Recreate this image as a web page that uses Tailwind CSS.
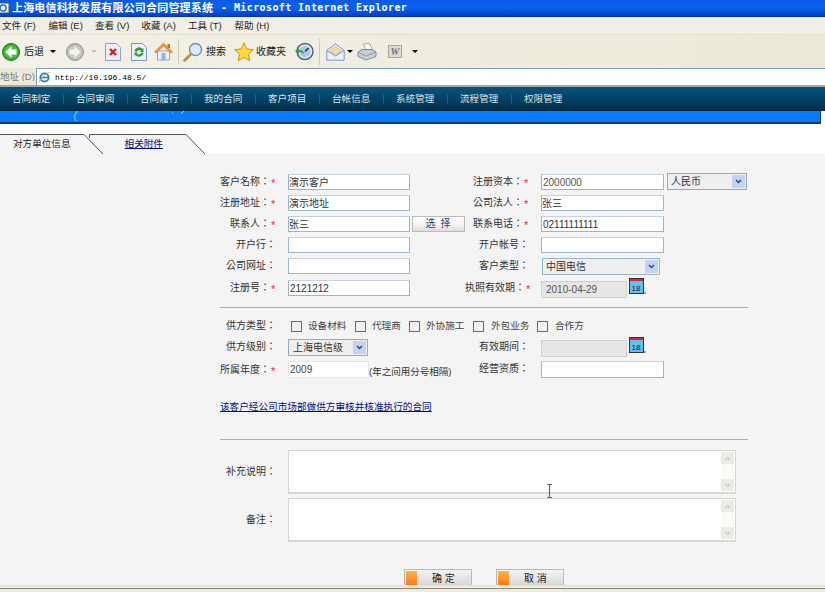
<!DOCTYPE html>
<html lang="en">
<head>
  <meta charset="UTF-8" />
  <title>合同管理系统</title>
  <script src="https://cdn.jsdelivr.net/npm/@tailwindcss/browser@4"></script>
</head>
<body class="w-[825px] h-[592px] overflow-hidden relative bg-white text-[#333] text-[10px] leading-none font-['Liberation_Sans','Noto_Sans_CJK_SC',sans-serif]">

  <!-- title bar -->
  <div class="h-[17px] flex items-center bg-gradient-to-b from-[#0a5ae6] via-[#0a62ec] to-[#0040c4] border-b border-[#0038b0] text-white overflow-hidden">
    <svg class="w-[10px] h-[12px] shrink-0" viewBox="0 0 10 12"><rect x="-3" y="1" width="12" height="10" fill="#f4f4f4" stroke="#555"/><circle cx="3" cy="6" r="3" fill="none" stroke="#2a6fc9" stroke-width="1.5"/></svg>
    <span class="ml-[2px] text-[11px] tracking-[0.17px] font-bold whitespace-nowrap">上海电信科技发展有限公司合同管理系统</span>
    <span class="ml-[8px] font-['DejaVu_Sans_Mono',monospace] font-bold text-[10px] tracking-[0.4px] whitespace-nowrap">- Microsoft Internet Explorer</span>
  </div>

  <!-- menu bar -->
  <div class="h-[18px] flex items-center bg-[#f1efe5] border-b border-[#e4e0cf] text-[#222] text-[9.5px] whitespace-nowrap pl-[2px]">
    <span class="w-[46.5px]">文件 (F)</span>
    <span class="w-[46.5px]">编辑 (E)</span>
    <span class="w-[46.5px]">查看 (V)</span>
    <span class="w-[46.5px]">收藏 (A)</span>
    <span class="w-[46.5px]">工具 (T)</span>
    <span class="w-[46.5px]">帮助 (H)</span>
  </div>

  <!-- toolbar -->
  <div class="h-[33px] flex items-center bg-gradient-to-r from-[#f3f1e8] to-[#ece9d8] text-[#222] whitespace-nowrap pl-[2px]">
    <svg class="w-[18px] h-[18px] shrink-0" viewBox="0 0 18 18"><circle cx="9" cy="9" r="8.5" fill="#3aa62e" stroke="#1f7a1c"/><circle cx="9" cy="9" r="6.8" fill="#4cc03c"/><path d="M9.500 3 3.500 9l6 6v-3.500H14.500v-5H9.500z" fill="#fff"/></svg>
    <span class="ml-[4px] w-[18px]">后退</span>
    <span class="ml-[8px] w-0 h-0 border-x-[3px] border-x-transparent border-t-[3px] border-t-black"></span>
    <svg class="ml-[10px] w-[18px] h-[18px] shrink-0" viewBox="0 0 18 18"><circle cx="9" cy="9" r="8.5" fill="#b9b9b2" stroke="#9a9a92"/><circle cx="9" cy="9" r="6.800" fill="#c9c9c2"/><path d="M8.500 3l6 6-6 6v-3.500H3.500v-5H8.500z" fill="#f4f4f0"/></svg>
    <span class="ml-[7px] w-0 h-0 border-x-[3px] border-x-transparent border-t-[3px] border-t-[#c4c2b6]"></span>
    <svg class="ml-[8px] w-[16px] h-[18px] shrink-0" viewBox="0 0 16 18"><path d="M.5.5h11l4 4v13H.5z" fill="#e9eefa" stroke="#8ea3cb"/><path d="M5 6l6 6M11 6l-6 6" stroke="#d8201c" stroke-width="2.400"/></svg>
    <svg class="ml-[10px] w-[16px] h-[18px] shrink-0" viewBox="0 0 16 18"><path d="M.5.5h11l4 4v13H.5z" fill="#e9eefa" stroke="#7f95c0"/><path d="M3.500 8a4.500 4.500 0 0 1 8-2l1-1v4H9l1.200-1.200A3 3 0 0 0 5.500 9z" fill="#2d9c2d"/><path d="M12.500 10a4.500 4.500 0 0 1-8 2l-1 1V9.500H7L5.800 10.800A3 3 0 0 0 10.500 9.500z" fill="#2d9c2d"/></svg>
    <svg class="ml-[7px] w-[19px] h-[19px] shrink-0" viewBox="0 0 19 19"><path d="M3.500 9v9h12V9z" fill="#eef0f6" stroke="#9aa5bd"/><rect x="7.500" y="11" width="4" height="7" fill="#8db3e2"/><path d="M.5 10 9.500 1l9 9-2 1-7-7-7 7z" fill="#ef9b3a" stroke="#c8701c" stroke-width=".6"/><rect x="13.500" y="2" width="2.500" height="4" fill="#c8701c"/></svg>
    <span class="ml-[5px] w-px h-[26px] bg-[#cfccba]"></span>
    <svg class="ml-[4px] w-[20px] h-[20px] shrink-0" viewBox="0 0 20 20"><circle cx="12.500" cy="7.500" r="6" fill="#d9ecfb" stroke="#6b8fb8" stroke-width="1.400"/><path d="M8 12 1.500 18.500" stroke="#c98a2e" stroke-width="2.600" stroke-linecap="round"/></svg>
    <span class="ml-[3px] w-[28px]">搜索</span>
    <svg class="w-[20px] h-[20px] shrink-0" viewBox="0 0 20 20"><path d="M10 .8l2.800 6.200 6.500.7-4.900 4.400 1.400 6.600L10 15.400l-5.800 3.300 1.400-6.600L.7 7.700 7.200 7z" fill="#ffd83a" stroke="#c69a12"/></svg>
    <span class="ml-[2px] w-[39px]">收藏夹</span>
    <svg class="w-[19px] h-[19px] shrink-0" viewBox="0 0 19 19"><circle cx="10" cy="9.500" r="8" fill="#dfe6ee" stroke="#55606e" stroke-width="1.400"/><circle cx="10" cy="9.500" r="5.500" fill="#a9c6e6"/><path d="M10 9.500l3.500-3.500" stroke="#223" stroke-width="1.200"/><path d="M0 9l4-3v2c3 0 5 1.500 5 4-2-1.500-3-2-5-2v2z" fill="#2f9e36"/></svg>
    <span class="ml-[5px] w-px h-[26px] bg-[#cfccba]"></span>
    <svg class="ml-[6px] w-[19px] h-[18px] shrink-0" viewBox="0 0 19 18"><path d="M.8 7.500 9.500.8l8.700 6.700v9.700H.8z" fill="#e9eefb" stroke="#7e96c8"/><path d="M3.500 8 9.500 3.500 15.500 8l-6 4z" fill="#f7d9a8" stroke="#d9a860" stroke-width=".6"/><path d="M.8 7.500 9.500 13l8.700-5.500" fill="none" stroke="#7e96c8"/></svg>
    <span class="ml-[2px] w-0 h-0 border-x-[3px] border-x-transparent border-t-[3px] border-t-black"></span>
    <svg class="ml-[4px] w-[20px] h-[18px] shrink-0" viewBox="0 0 20 18"><path d="M6.500 1l6-.5 3 6-6 1z" fill="#fff" stroke="#8b8f96" stroke-width=".8"/><path d="M1 9 5 6.500h10L19 9v4.500L9 17 1 13.500z" fill="#c9ced6" stroke="#70757d" stroke-width=".8"/><path d="M1 9.500l8 3.500 10-4" fill="none" stroke="#8b9099" stroke-width=".8"/></svg>
    <span class="ml-[11px] flex items-center justify-center w-[14px] h-[13px] bg-[#dcdbd2] border border-[#a8a79e] font-['Liberation_Serif',serif] italic font-bold text-[10px] text-[#777]">W</span>
    <span class="ml-[10px] w-0 h-0 border-x-[3px] border-x-transparent border-t-[3px] border-t-black"></span>
  </div>

  <!-- address bar -->
  <div class="h-[17px] flex items-center bg-[#ece9d8] whitespace-nowrap">
    <span class="w-[36px] shrink-0 overflow-hidden text-[9.5px] text-[#777]">地址 (D)</span>
    <div class="flex-1 h-full bg-white border-t border-[#7f9db9] border-l flex items-center pl-[1px]">
      <svg class="w-[13px] h-[13px] shrink-0" viewBox="0 0 13 13"><circle cx="6.500" cy="6.500" r="4.200" fill="#dcefff" stroke="#2a78c8" stroke-width="1.800"/><path d="M3 6.500h7" stroke="#2a78c8" stroke-width="1.300"/><path d="M1 11C3 7 8 2 12 1" fill="none" stroke="#e8a23a"/></svg>
      <span class="ml-[4px] mt-[1px] font-['Liberation_Mono',monospace] text-[8px] text-black">http://10.196.48.5/</span>
    </div>
  </div>
  <div class="h-[2px] bg-[#a9a89f]"></div>

  <!-- app nav -->
  <nav class="h-[24px] pt-[1px] flex items-center bg-gradient-to-b from-[#04557f] to-[#02304c] border-b border-[#01263e] text-[#d8e4ec] text-[9.6px] whitespace-nowrap">
    <a class="w-[64px] pl-[12px] border-r border-[#17618a] h-[10px] flex items-center">合同制定</a>
    <a class="w-[64px] pl-[12px] border-r border-[#17618a] h-[10px] flex items-center">合同审阅</a>
    <a class="w-[64px] pl-[12px] border-r border-[#17618a] h-[10px] flex items-center">合同履行</a>
    <a class="w-[64px] pl-[12px] border-r border-[#17618a] h-[10px] flex items-center">我的合同</a>
    <a class="w-[64px] pl-[12px] border-r border-[#17618a] h-[10px] flex items-center">客户项目</a>
    <a class="w-[64px] pl-[12px] border-r border-[#17618a] h-[10px] flex items-center">台帐信息</a>
    <a class="w-[64px] pl-[12px] border-r border-[#17618a] h-[10px] flex items-center">系统管理</a>
    <a class="w-[64px] pl-[12px] border-r border-[#17618a] h-[10px] flex items-center">流程管理</a>
    <a class="w-[64px] pl-[12px] h-[10px] flex items-center">权限管理</a>
  </nav>
  <div class="h-[13px] w-[821px] bg-[#0a7bf8] border-b-2 border-r border-[#0d3f6e] flex items-start overflow-hidden">
    <svg class="ml-[72px] w-[116px] h-[12px]" viewBox="0 0 116 12"><path d="M6 0C2 3 2 7 4 10" fill="none" stroke="#5aa5f5" stroke-width="2"/><path d="M100 2h1M112 0l-3 3" stroke="#9fcdfb" stroke-width="1"/></svg>
  </div>

  <!-- tabs -->
  <div class="h-[30px] relative bg-white">
    <svg class="absolute left-0 top-[10px] w-[206px] h-[20px]" viewBox="0 0 206 20">
      <path d="M89.500 .5H186L205 20H103L89.500 5z" fill="#f4f4f4"/>
      <path d="M89.500 4V.5H186L205 20" fill="none" stroke="#555"/>
      <path d="M0 .5H84L103 20H0z" fill="#f4f4f4"/>
      <path d="M0 .5H84L103 20" fill="none" stroke="#555"/>
    </svg>
    <div class="relative flex pt-[15px] text-[9.6px] whitespace-nowrap">
      <span class="ml-[13px] text-[#222]">对方单位信息</span>
      <a class="ml-[54px] text-[#000f88] underline">相关附件</a>
    </div>
  </div>

  <!-- form panel -->
  <main class="h-[431px] bg-[#f4f4f4] pt-[20px] pl-[220px] overflow-hidden">
    <div class="w-[528px]">

      <div class="grid grid-cols-[68px_122px_55px_76px_123px_84px] auto-rows-[21px] items-start">
        <div class="flex justify-end h-[16px] items-center whitespace-nowrap font-['Liberation_Sans','Noto_Sans_CJK_TC',sans-serif]">客户名称：<span class="w-[18px] pl-[1px] pt-[2px] text-[#f02040] text-[11px]">*</span></div>
        <input value="演示客户" class="h-[16px] w-[122px] bg-white border border-[#9db4cc] border-t-[#c4d2e0] pb-[2px] text-[10px] text-[#333]" />
        <div></div>
        <div class="flex justify-end h-[16px] items-center whitespace-nowrap font-['Liberation_Sans','Noto_Sans_CJK_TC',sans-serif]">注册资本：<span class="w-[18px] pl-[1px] pt-[2px] text-[#f02040] text-[11px]">*</span></div>
        <input value="2000000" class="h-[16px] w-[123px] bg-white border border-[#9db4cc] border-t-[#c4d2e0] px-[1px] text-[10px] text-[#555]" />
        <div class="ml-[3px] -mt-[1px] w-[80px] h-[17px] flex items-center justify-between bg-[#efefef] border border-[#8fabcf] pl-[3px] pr-[1px]">
          <span>人民币</span>
          <span class="w-[13px] h-[13px] bg-[#c3d3f4] flex items-center justify-center"><svg class="w-[7px] h-[5px]" viewBox="0 0 7 5"><path d="M1 1l2.500 2.500L6 1" fill="none" stroke="#2a4a80" stroke-width="1.500"/></svg></span>
        </div>

        <div class="flex justify-end h-[16px] items-center whitespace-nowrap font-['Liberation_Sans','Noto_Sans_CJK_TC',sans-serif]">注册地址：<span class="w-[18px] pl-[1px] pt-[2px] text-[#f02040] text-[11px]">*</span></div>
        <input value="演示地址" class="h-[16px] w-[122px] bg-white border border-[#9db4cc] border-t-[#c4d2e0] pb-[2px] text-[10px] text-[#333]" />
        <div></div>
        <div class="flex justify-end h-[16px] items-center whitespace-nowrap font-['Liberation_Sans','Noto_Sans_CJK_TC',sans-serif]">公司法人：<span class="w-[18px] pl-[1px] pt-[2px] text-[#f02040] text-[11px]">*</span></div>
        <input value="张三" class="h-[16px] w-[123px] bg-white border border-[#9db4cc] border-t-[#c4d2e0] pb-[2px] text-[10px] text-[#333]" />
        <div></div>

        <div class="flex justify-end h-[16px] items-center whitespace-nowrap font-['Liberation_Sans','Noto_Sans_CJK_TC',sans-serif]">联系人：<span class="w-[18px] pl-[1px] pt-[2px] text-[#f02040] text-[11px]">*</span></div>
        <input value="张三" class="h-[16px] w-[122px] bg-white border border-[#9db4cc] border-t-[#c4d2e0] pb-[2px] text-[10px] text-[#333]" />
        <button class="ml-[2px] w-[53px] h-[16px] bg-gradient-to-b from-[#fdfdfd] via-[#f6f6f6] to-[#dcdcdc] border border-[#bdbdb8] text-[#1d4a78] text-[10px] tracking-[1px] whitespace-pre">选 择</button>
        <div class="flex justify-end h-[16px] items-center whitespace-nowrap font-['Liberation_Sans','Noto_Sans_CJK_TC',sans-serif]">联系电话：<span class="w-[18px] pl-[1px] pt-[2px] text-[#f02040] text-[11px]">*</span></div>
        <input value="02111111111" class="h-[16px] w-[123px] bg-white border border-[#9db4cc] border-t-[#c4d2e0] px-[1px] text-[10px] text-[#333]" />
        <div></div>

        <div class="flex justify-end h-[16px] items-center whitespace-nowrap font-['Liberation_Sans','Noto_Sans_CJK_TC',sans-serif]">开户行：<span class="w-[12px]"></span></div>
        <input class="h-[16px] w-[122px] bg-white border border-[#9db4cc] border-t-[#c4d2e0] px-[1px] text-[10px]" />
        <div></div>
        <div class="flex justify-end h-[16px] items-center whitespace-nowrap font-['Liberation_Sans','Noto_Sans_CJK_TC',sans-serif]">开户帐号：<span class="w-[12px]"></span></div>
        <input class="h-[16px] w-[123px] bg-white border border-[#9db4cc] border-t-[#c4d2e0] px-[1px] text-[10px]" />
        <div></div>

        <div class="flex justify-end h-[16px] items-center whitespace-nowrap font-['Liberation_Sans','Noto_Sans_CJK_TC',sans-serif]">公司网址：<span class="w-[12px]"></span></div>
        <input class="h-[16px] w-[122px] bg-white border border-[#9db4cc] border-t-[#c4d2e0] px-[1px] text-[10px]" />
        <div></div>
        <div class="flex justify-end h-[16px] items-center whitespace-nowrap font-['Liberation_Sans','Noto_Sans_CJK_TC',sans-serif]">客户类型：<span class="w-[12px]"></span></div>
        <div class="ml-[1px] w-[118px] h-[17px] flex items-center justify-between bg-[#efefef] border border-[#9db4cc] pl-[3px] pr-[1px]">
          <span>中国电信</span>
          <span class="w-[13px] h-[13px] bg-[#c3d3f4] flex items-center justify-center"><svg class="w-[7px] h-[5px]" viewBox="0 0 7 5"><path d="M1 1l2.500 2.500L6 1" fill="none" stroke="#2a4a80" stroke-width="1.500"/></svg></span>
        </div>
        <div></div>

        <div class="flex justify-end h-[16px] mt-[1px] items-center whitespace-nowrap font-['Liberation_Sans','Noto_Sans_CJK_TC',sans-serif]">注册号：<span class="w-[18px] pl-[1px] pt-[2px] text-[#f02040] text-[11px]">*</span></div>
        <input value="2121212" class="mt-[1px] h-[16px] w-[122px] bg-white border border-[#9db4cc] border-t-[#c4d2e0] px-[1px] text-[10px] text-[#333]" />
        <div></div>
        <div class="flex justify-end h-[16px] mt-[1px] items-center whitespace-nowrap font-['Liberation_Sans','Noto_Sans_CJK_TC',sans-serif]">执照有效期：<span class="w-[18px] pl-[1px] pt-[2px] text-[#f02040] text-[11px]">*</span></div>
        <div class="flex items-start">
          <input value="2010-04-29" class="mt-[2px] h-[17px] w-[86px] bg-[#e6e6e6] border border-[#d0d0d0] pl-[4px] text-[10px] text-[#555]" />
          <svg class="ml-[2px] -mt-[1px] w-[17px] h-[17px] shrink-0" viewBox="0 0 17 17"><rect x=".5" y=".5" width="14" height="15" fill="#62c0f0" stroke="#333"/><rect x="1" y="1" width="13" height="2" fill="#d8282c"/><text x="2.500" y="12.500" font-size="8" fill="#123" font-family="Liberation Sans">18</text><path d="M15.500 14l1 1-1 1" fill="none" stroke="#555"/></svg>
        </div>
        <div></div>
      </div>

      <div class="mt-[7px] h-px bg-[#b5b09a]"></div>

      <div class="mt-[6px] grid grid-cols-[68px_122px_55px_76px_123px_84px] auto-rows-[21px] items-start">
        <div class="flex justify-end h-[16px] mt-[4px] items-center whitespace-nowrap font-['Liberation_Sans','Noto_Sans_CJK_TC',sans-serif]">供方类型：<span class="w-[12px]"></span></div>
        <div class="col-span-5 flex items-center h-[16px] mt-[4px] ml-[3px] text-[9.6px] whitespace-nowrap text-[#444]">
          <span class="w-[11px] h-[11px] bg-[#f2f2f2] border border-[#4f7196]"></span>
          <span class="ml-[6px] w-[47px]">设备材料</span>
          <span class="w-[11px] h-[11px] bg-[#f2f2f2] border border-[#4f7196]"></span>
          <span class="ml-[6px] w-[37px]">代理商</span>
          <span class="w-[11px] h-[11px] bg-[#f2f2f2] border border-[#4f7196]"></span>
          <span class="ml-[6px] w-[47px]">外协施工</span>
          <span class="w-[11px] h-[11px] bg-[#f2f2f2] border border-[#4f7196]"></span>
          <span class="ml-[7px] w-[46px]">外包业务</span>
          <span class="w-[11px] h-[11px] bg-[#f2f2f2] border border-[#4f7196]"></span>
          <span class="ml-[7px]">合作方</span>
        </div>

        <div class="flex justify-end h-[16px] mt-[4px] items-center whitespace-nowrap font-['Liberation_Sans','Noto_Sans_CJK_TC',sans-serif]">供方级别：<span class="w-[12px]"></span></div>
        <div class="mt-[4px] w-[80px] h-[17px] flex items-center justify-between bg-[#efefef] border border-[#8fabcf] pl-[4px] pr-[1px]">
          <span>上海电信级</span>
          <span class="w-[13px] h-[13px] bg-[#c3d3f4] flex items-center justify-center"><svg class="w-[7px] h-[5px]" viewBox="0 0 7 5"><path d="M1 1l2.500 2.500L6 1" fill="none" stroke="#2a4a80" stroke-width="1.500"/></svg></span>
        </div>
        <div></div>
        <div class="flex justify-end h-[16px] mt-[4px] items-center whitespace-nowrap font-['Liberation_Sans','Noto_Sans_CJK_TC',sans-serif]">有效期间：<span class="w-[12px]"></span></div>
        <div class="flex items-start">
          <input class="mt-[5px] h-[17px] w-[86px] bg-[#e6e6e6] border border-[#d0d0d0]" />
          <svg class="ml-[2px] mt-[2px] w-[17px] h-[17px] shrink-0" viewBox="0 0 17 17"><rect x=".5" y=".5" width="14" height="15" fill="#62c0f0" stroke="#333"/><rect x="1" y="1" width="13" height="2" fill="#d8282c"/><text x="2.500" y="12.500" font-size="8" fill="#123" font-family="Liberation Sans">18</text><path d="M15.500 14l1 1-1 1" fill="none" stroke="#555"/></svg>
        </div>
        <div></div>

        <div class="flex justify-end h-[16px] mt-[6px] items-center whitespace-nowrap font-['Liberation_Sans','Noto_Sans_CJK_TC',sans-serif]">所属年度：<span class="w-[18px] pl-[1px] pt-[2px] text-[#f02040] text-[11px]">*</span></div>
        <div class="col-span-2 flex items-start mt-[5px] whitespace-nowrap">
          <input value="2009" class="h-[17px] w-[81px] bg-white border border-[#e6e6e6] px-[1px] text-[10px] text-[#444]" />
          <span class="mt-[6px] text-[9.5px] text-[#333]">(年之间用分号相隔)</span>
        </div>
        <div class="flex justify-end h-[16px] mt-[5px] items-center whitespace-nowrap font-['Liberation_Sans','Noto_Sans_CJK_TC',sans-serif]">经营资质：<span class="w-[12px]"></span></div>
        <input class="mt-[5px] h-[17px] w-[123px] bg-white border border-[#9db4cc] border-t-[#c4d2e0]" />
        <div></div>
      </div>

      <a class="block mt-[25px] h-[10px] text-[9.64px] text-[#000f88] underline whitespace-nowrap">该客户经公司市场部做供方审核并核准执行的合同</a>

      <div class="mt-[27px] h-px bg-[#b5b09a]"></div>

      <div class="mt-[10px] flex items-center h-[44px]">
        <div class="w-[68px] flex justify-end whitespace-nowrap font-['Liberation_Sans','Noto_Sans_CJK_TC',sans-serif]">补充说明：<span class="w-[12px]"></span></div>
        <div class="w-[448px] h-[44px] flex bg-white border border-[#d6d6d6] border-b-2">
          <textarea class="flex-1 resize-none"></textarea>
          <div class="w-[13px] my-[1px] mr-[1px] bg-[#fbfbf6] flex flex-col justify-between">
            <span class="h-[12px] bg-[#ecece4] flex items-center justify-center"><svg class="w-[7px] h-[5px]" viewBox="0 0 7 5"><path d="M1 4l2.500-2.500L6 4" fill="none" stroke="#b5b5aa"/></svg></span>
            <span class="h-[12px] bg-[#ecece4] flex items-center justify-center"><svg class="w-[7px] h-[5px]" viewBox="0 0 7 5"><path d="M1 1l2.500 2.500L6 1" fill="none" stroke="#b5b5aa"/></svg></span>
          </div>
        </div>
      </div>
      <div class="mt-[4px] flex items-center h-[44px]">
        <div class="w-[68px] flex justify-end whitespace-nowrap font-['Liberation_Sans','Noto_Sans_CJK_TC',sans-serif]">备注：<span class="w-[12px]"></span></div>
        <div class="w-[448px] h-[44px] flex bg-white border border-[#d6d6d6] border-b-2">
          <textarea class="flex-1 resize-none"></textarea>
          <div class="w-[13px] my-[1px] mr-[1px] bg-[#fbfbf6] flex flex-col justify-between">
            <span class="h-[12px] bg-[#ecece4] flex items-center justify-center"><svg class="w-[7px] h-[5px]" viewBox="0 0 7 5"><path d="M1 4l2.500-2.500L6 4" fill="none" stroke="#b5b5aa"/></svg></span>
            <span class="h-[12px] bg-[#ecece4] flex items-center justify-center"><svg class="w-[7px] h-[5px]" viewBox="0 0 7 5"><path d="M1 1l2.500 2.500L6 1" fill="none" stroke="#b5b5aa"/></svg></span>
          </div>
        </div>
      </div>

      <div class="mt-[27px] ml-[184px] flex gap-[24px]">
        <button class="w-[68px] h-[17px] flex bg-gradient-to-b from-[#f4f4f4] to-[#d6d6d6] border border-[#b9b9b9] border-b-0 text-[#222] text-[10px] whitespace-pre">
          <span class="ml-[1px] mt-[1px] w-[11px] h-[14px] bg-gradient-to-b from-[#fdb34a] to-[#ff7a10]"></span>
          <span class="ml-[15px] mt-[4px]">确 定</span>
        </button>
        <button class="w-[68px] h-[17px] flex bg-gradient-to-b from-[#f4f4f4] to-[#d6d6d6] border border-[#b9b9b9] border-b-0 text-[#222] text-[10px] whitespace-pre">
          <span class="ml-[1px] mt-[1px] w-[11px] h-[14px] bg-gradient-to-b from-[#fdb34a] to-[#ff7a10]"></span>
          <span class="ml-[15px] mt-[4px]">取 消</span>
        </button>
      </div>
    </div>
  </main>

  <!-- window bottom edge -->
  <div class="h-[7px] bg-[#efecdc] border-t border-[#e6e1c8]">
    <div class="mt-[2px] h-px bg-[#8b8a80]"></div>
  </div>

  <!-- mouse cursor -->
  <svg class="absolute left-[546px] top-[484px] w-[7px] h-[14px]" viewBox="0 0 7 14"><path d="M1 .5h5M3.500 .5v13M1 13.500h5" fill="none" stroke="#666" stroke-width="1.200"/></svg>
</body>
</html>
